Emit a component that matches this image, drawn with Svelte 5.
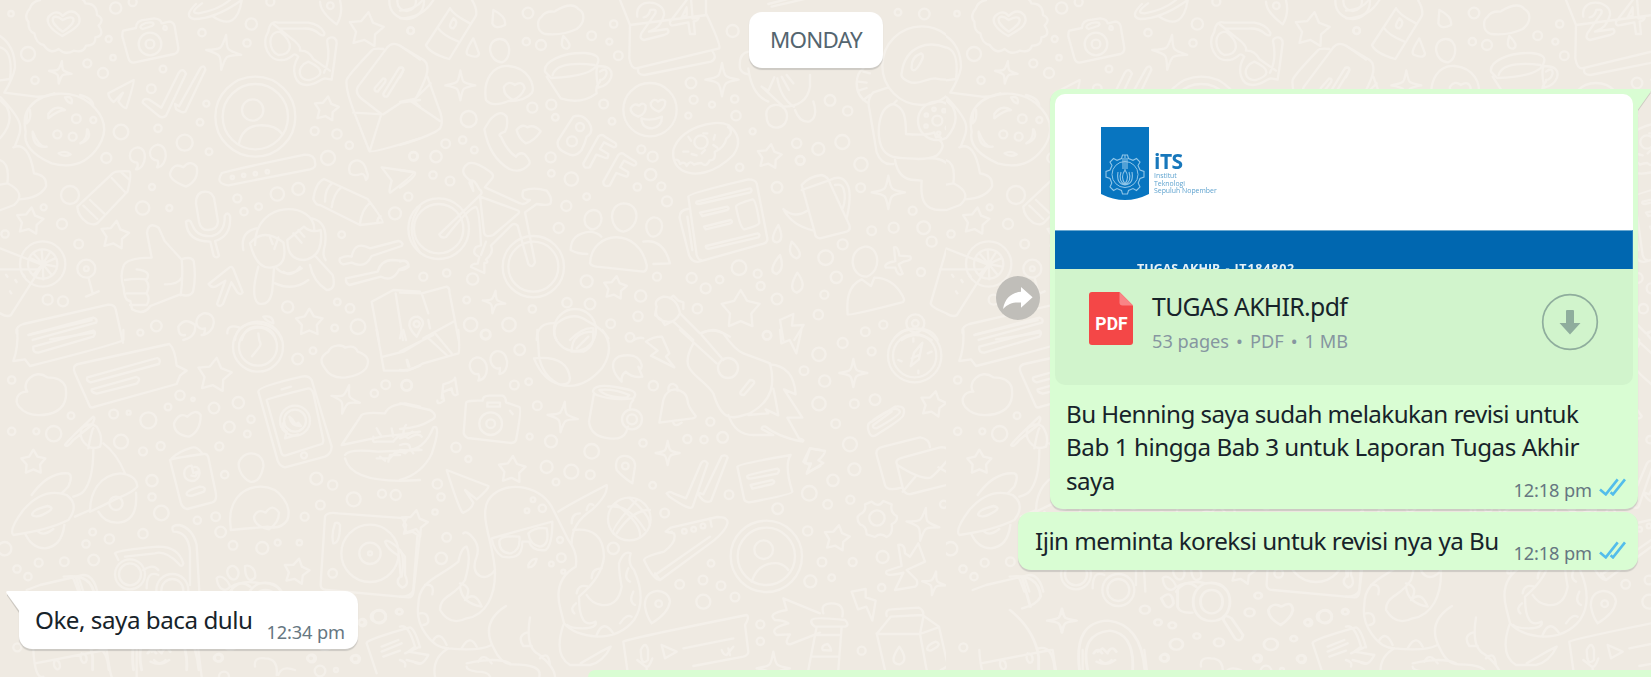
<script>
  // One wallpaper tile is 946px wide; each sheet holds doodles in its own local units.
  const sheets = [
    {
      m: 'matrix(.33333 0 0 .33333 0 0)',
      rings: '33 41 8,347 24 17,398 6 12,326 117 9,84 162 21,105 241 11,262 190 12,339 173 8,309 219 15,489 207 10,454 266 13,619 311 9,606 98 11,741 129 11,754 72 17,811 5 12,600 367 10,363 396 22,474 385 11,554 428 24,319 474 15,627 455 10,456 561 9,508 624 9,210 585 27,428 624 20,131 622 9,186 672 15,236 732 13,15 702 11,143 899 15,189 904 15,421 998 9,469 978 16,712 595 12,732 635 11,776 620 10,832 582 20,895 567 18,944 393 12,1011 402 14,1048 436 11,984 474 21,1232 92 10,1240 468 12,1225 590 12,1185 640 18,1025 704 10,1012 906 10,1050 925 13,863 921 17,1004 984 10,1074 980 22,697 532 5,731 526 5,766 521 5,802 515 5,450 132 34,450 132 13,766 350 120,766 350 98,758 330 32,229 356 13,128 792 68,128 792 44,259 806 27,259 806 7,991 17 10,1220 5 52,1220 5 28,172 403 12,218 410 12,280 360 9',
      stars: '1098 90 54 8,979 327 38 8,89 664 42 8,344 706 44 8,928 968 42 0',
      sparks: '671 157 53 8,181 217 34 8',
      paths: [
        'M120 0q-25 5-30 25q-20 25-5 40q0 30 18 35q5 30 28 35q20 30 45 12q20 20 45 5q30 8 37-15q30 0 28-25q30-5 10-35q20-20-5-32q0-35-35-35q-5-20-35-15',
        'M188 48q-14-18-33-6c-28 18-2 48 32 66c30-18 64-34 48-62q-20-24-47 2zM188 60c-30-25-49 2 0 35c50-30 37-57 0-35z',
        'M370 92l38-8q0-24 30-25l25-4q20 2 22 15l23-5q12 0 16 14l11 65q0 14-12 18l-122 26q-12 0-16-14l-18-65q0-14 3-17zM425 75q15-10 33-7q6 5-2 10l-28 9q-12-4-3-12zM492 78q10 0 8 10q-8 4-10-3z',
        'M588 12q-40 38-5 45q60 0 138-54M606 10q-42 30-10 30q60-10 94-40M640 50q70 45 85-48',
        'M805 95q5-35 30-27l90 0q35 5 48 30q2 15-16 3q-20-18-50-15h-70M820 72l50 40q35 25 30 40q25-2 40 25l50 35M805 95c-25 40 5 90 40 85c35 0 32-30 50-10c-25 40-10 85 25 85c30 0 40-18 55-20l20 4q8-50 15-110c0-26-35-18-28-1q10 50-10 90M840 95c-40 0-35 60-5 70c40 0 50-35 5-70zM925 185c-40 15-30 60 5 55c35-10 50-30-5-55z',
        'M960 5q0 30 50 68q20-30 10-73M1040 240q-5 25 23 98l45 115q5 8 152-38M1040 240q5-15 75-88q5-8 35-5M1162 142l-88 118q-10 16 8 34l62 48l-35 112M1060 338l90 5l52-35l58-8M1162 142q15-18 38-5l60 42M1240 302l20 18M1198 203q12-4 12 8l-48 78q-12 4-12-8zM1150 235q10 0 5 12l-22 28q-12 0-8-12z',
        'M325 280l76-40q3 4-22 84q-8 2-24-20l14-26l-28 28q-16-12-16-26zM428 308q0-14 18-10l38 25l52-104q12-18 22 2l-60 126q-8 8-20 2zM525 312l12 7l65-116q12-10 14 6l-60 126q-8 6-28-8z',
        'M717 430q10-50 60-54q50-2 70 26',
        'M0 108q45 30 45 95q-5 30-32 75l95 12q30 2 55-10M0 142q40 10 30 95l-30 4M2 292c75 80 65 90 42 148M0 415q45-50 20-95l-20-20M40 442q45-20 62 78q40 5 36 40q-20 35-80 38M0 480q30 10 22 70l-22 4M22 550q60 30 20 65l-40 15',
        'M90 320c40-50 130-50 180-10q70 60 25 130q-50 75-140 50q-90-40-78-95q-10-50 13-75zM80 370q0-50 10-40q4 30-10 40zM195 292q25-5 20 18q-12 0-20-18zM145 342q20-30 50-12q-20 0-50 25zM98 395q20 50 42 45q-40 5-42-40zM263 388q15 30-22 42q22-12 20-42zM176 460q20-10 36 3q-20 10-36-3zM240 285q40 10 40 35',
        'M412 508c25-5 35-65 0-66c-30 5-30 45 0 46q4 10-4 20zM473 502c30-5 35-65 0-68c-32 8-30 45 0 48q4 10-2 20zM510 520q12-35 40-18q20-24 40-2q8 40-32 60q-50-20-48-40zM232 620l106-100q8-8 50-6q8 5-5 60l-90 95q-10 8-30 0q-30-20-31-49zM335 534l40 42M365 518l22 20M270 600l42 40M250 617l42 40',
        'M665 520q4-5 250-56q30 0 30 24q5 15-15 20l-245 48q-40-5-20-36zM588 610q0-35 28-35q25 0 28 30l10 60q-2 25-30 25q-22 0-27-25zM558 665q12-10 18 8q15 40 60 35q40-10 38-60q8-15 16 0q5 60-45 75l12 44q-8 10-16 0l-10-42q-70 0-73-60',
        'M1050 520c-15-40 40-60 50-5q8 15-2 25q-4-20-15-18q-20 8-33-2zM1145 502l96 14q4 6-70 62q-6 0 4-36zM972 537q-25 10-32 60q8 20 20 18l120 60l68-8q4-4-45-70zM975 605q0-40 22-56M995 622q5-40 28-60M1080 670q5-40 30-62M1132 665q0-12 10-16',
        'M370 800q5-26 85-27l-14-75q5-35 35-15l18 40l50 55q30-10 37 5q8 50-2 92q-10 18-38 8l-90 35q-20 30-55 10l-5-25q-18 0-20-40q-12-35-1-63zM545 778q5 50-3 108M375 840q30-5 65-2q16-25-30-30M380 880h60q12-25-3-40M390 915h50q12-18 0-35M495 853q40 0 50-20',
        'M0 745l128 50l-95 150q-10 8-33-5M0 808h115M128 792L100 760M128 792L92 775M128 792L125 750M128 792L150 757M128 792L165 775M128 792L168 800M128 792L155 825M128 792L130 838M128 792L100 825M266 835l12 45M258 890l38-16M18 824l4 6M46 840l4 6M70 824l4 6M30 874l4 6',
        'M765 735c0-140 180-130 178-45M730 750q-10-55 40-65M935 655q50 10 40 80q-10 30 2 45M750 730q20 80 65 72q50-5 35-75q-60-45-100 3zM862 720q0 60 50 60q60-10 50-90q-30 10-50-10zM835 712l-12 35M810 712l8 20M880 700l25 28M895 690l18 20M775 800q-25 90 0 110q35 10 42-40l5-65M830 805q30 30 75 0M850 815q25 20 50-15M825 850q55 25 100-10M930 795q10 50 50 75q30 0 18-45l-50-55',
        'M685 805q10-10 15 2l28 70q-5 10-16 0l-18-30l-25 65q-12 12-18 0l25-70l-30 18q-12 4-20-8zM1020 775q20-10 35-5q10-50 55-25l85-22q18 5 10 15l-90 30q-20 40-60 20l-25 5q-15-5-10-18zM1038 835l95-20q10-35 45-35l35 3q15 5 10 15l-25 10q-20 40-55 22l-95 25q-12-5-10-20M1260 875l-80-5l-65 35l22 120M1187 880l22 140',
        'M50 1000q-5-20 20-28l255-58q20 0 22 14l22 100M90 1003l190-50q14 4 8 15l-190 52M150 1018l130-20M1260 618q-50 70 0 140',
        'M550 1020q40-10 35-45q-30-25-50 5q0 30 20 25M605 1005c45-5 50-70 5-65c-35 15-20 55 5 45q0 15-6 20M705 1020q5-50 65-50q60 5 75 50M725 1020q10-40 48-40q45 0 55 40M682 1000q-2-28 35-18M790 950q30-5 30 20q-20-5-30-20z'
      ]
    },
    {
      m: 'matrix(.33333 0 0 .33333 400 0)',
      rings: '32 92 10,384 39 16,641 72 11,575 107 13,379 125 11,423 135 15,628 125 9,655 167 13,397 323 15,454 314 15,611 312 13,466 352 10,636 364 10,206 357 24,137 431 13,188 420 11,223 450 10,41 469 13,108 470 17,99 525 11,150 543 13,452 472 15,454 520 10,514 537 20,560 590 10,499 618 15,476 684 15,724 448 12,758 470 15,712 561 11,752 524 17,784 559 12,801 604 15,873 249 16,881 299 12,936 314 9,865 347 9,1008 347 14,1004 297 11,1058 394 9,1019 502 11,1190 430 14,1200 481 13,998 93 18,1131 562 16,1017 803 22,1073 821 12,1082 858 12,959 839 11,917 865 15,875 834 15,1131 897 16,771 830 12,892 926 14,722 888 17,714 949 14,632 971 13,560 844 18,501 908 14,570 912 16,397 927 11,327 974 20,212 974 20,257 1004 15,200 900 10,218 837 17,140 819 11,70 830 12,750 329 80,540 381 12,516 424 15,116 686 91,116 686 74,400 800 92,400 800 75,50 972 9,903 426 20',
      stars: '1108 470 38 8,645 864 36 8,1022 930 60 0',
      sparks: '181 256 45 0,966 239 50 0,282 906 34 8',
      paths: [
        'M0 137l72 44q12 10 10 30q0 20-35 85l-47 10M82 230l40 110q8 30-2 45q-20 20-120 50M35 305l85 58M92 250l-50 50M0 204q15-5 8 12l-8 16',
        'M0 55q70 0 103-60M0 32q50-4 70-35M150 25L78 135q10 25 70 42l80-130q5-20-15-52M150 25q10 20 60 45M112 82q18 25 62 42M160 55q-20 30 0 30q18-18 0-30zM280 30q40 20 35 45q-30 15-38-5zM220 115q-30 45-15 50q30 12 32-5zM490 108q30 30 12 38q-25 0-12-38z',
        'M425 50c15-25 40-10 42-18q50-28 68-5c20 10 22 40-5 60q-40 20-95 15c-30-10-22-45-10-52zM298 117c-45 5-30 70 8 70c30-10 30-72-8-70zM258 300c-10-60 20-105 68-102c60 5 80 60 70 80q-20 25-70 25q-50 20-68-3zM312 260q15-20 32-5q25-15 30 10q-10 25-35 35q-30-15-27-40zM435 215c-5-30 50-58 120-56q50 4 38 30q-10 40-140 45zM440 230l42 65q60 20 108-15q-5-20 10-35M458 225c10-40 90-35 125-30M593 198q50 0 40 35q-10 25-38 30q-10-50-2-65zM600 215q20-15 20 5q-5 20-20 20',
        'M660 0l30 75l-2 100q5 30 20 30l250-60q5-10-40-105v-40M690 75l230-30M715 205q-5 20 18 20l200-40q20-10 5-30M712 50c-10-60 85-50 80-5q-10 40-45 50l55-8q10 12-10 18l-60 15q-15-2-8-20l42-60q5-15-15-10q-5 20-20 22M860 0l-50 65q-2 15 15 10l40-8l5 35h15l-4-38q12 0 15-10l-18 2l-5-60M845 52l15-30v25z',
        'M692 325q10-18 25-8q12-12 20 0q2 25-22 33q-25-10-23-25zM752 310q10-18 22-5q15-12 22 0q0 20-20 30q-25-10-24-25zM724 355q30 10 62-5q0 30-30 35q-30 0-32-30z',
        'M820 450c20-65 120-95 165-75q50 40 15 90c-60 60-120 65-155 45q-30-20-25-60zM822 480q15-5 18 12q15-10 20 6q10-20 22-4q10-5 22-5q15 15 25-8q20 0 15-25q30-15 35-40q25-20 5-35M910 400h12M945 405l-4 14M865 410l8 12M850 455h15M875 462l15 4M905 460l10-10M940 435l12 8',
        'M270 360q30-35 50-10q5 30-5 45q-25 8-12 15q20 45 45 60q10-15 25-8q20 20 15 30q-25 30-60 15q-60-35-75-120zM350 390q15-20 32-8q20-10 40 12q-20 30-45 36q-22-15-27-40zM475 420l45-70q25-10 45 15q20 30-5 45q-5 20-15 40q-20 25-45 10q-35-15-25-40zM550 490l45-80q10-10 20 0l32 20q5 10-5 12l-30-15l-12 20l25 15q0 15-8 12l-28-10l-20 38q-20 5-19-12zM610 545l45-80q10-10 20 0l32 20q5 10-5 12l-30-15l-12 20l25 15q0 15-8 12l-28-10l-20 38q-20 5-19-12z',
        'M215 545q-45-30-10-55q20-8 65 25q15 10 5 22l-20 25l105 48q10 5 20-2l10-8q-30 0-20-28q30-12 70 0q20 25 10 40q-10 5-40 0l-35 25l30 150q-8 20-20 5l-32-115q-10-10-20 0l-60 60q10 20-15 42q10 10-5 10q0 20 0 30l-40-18q0-10 20-10l5-20q-25-10-10-30l15-5q-5-110-15-115q-20 0-90 90q-15 5-20-8l125-120q5-10-5-15q-20-40-30-20q10 20 12 25zM240 590l110 40q15 5 0 15l-70 60q-25 10-28-8zM258 725l-15 40M0 510l45 8q5 10-45 45M0 785q25-10 26 15q-10 10-26 10',
        'M512 750q0-50 60-55q25 5 32 15M512 750q20 12 50 12M730 725q60-10 80 65l-50 2M570 790c5-100 145-110 170 5q2 18-10 20l-140-15q-15-2-20-10zM580 630c-40 5-30 60 0 58c35-10 30-60 0-58zM670 610c-50 5-40 80 0 85c50-10 55-85 0-85zM760 652c-35 10-20 60 0 58c35-5 35-60 0-58z',
        'M865 590q0-10 180-52q20 0 25 12l32 165q2 15-20 18l-185 52q-20 4-30-20l-28-110q-2-25 25-28M865 590l25 175q5 15 12 15M890 605l160-40q8 4 2 12l-155 35q-12 0-7-7zM900 638l82-18q8 5 0 10l-75 18zM912 680l80-20q8 5 0 10l-75 18zM918 738l155-38q10 4 2 12l-145 34q-14 2-12-8zM1008 620q0-8 50-22q10 2 20 70q0 8-45 20q-12-2-25-68zM862 650l15 100',
        'M1135 675q-30 50-5 52q25-5 5-52zM1175 725q40 40 15 50q-30-10-15-50zM1140 765q-40 50-10 57q25-15 10-57zM1192 818q-30 50-2 60q35-15 2-60z',
        'M0 878l65 2l75-20q10 5 8 15l28 145M65 880l20 60M85 960l5 25M160 965l-90 50M0 1015l5-20M28 975q0-25 25-25q20 10 15 25l-18 35q-20-20-22-35zM410 1020q0-55 60-50q50-40 95-5q40 20 60 50M470 970q-15 30 0 50M510 1020q40-40 70-35v35M770 920q-10-20 20-30q40 0 50 50q-15 30-40 25q-40-5-30-45zM770 920l-5 25l20 15l10 15l20-10M810 895l10-8l15 15l15 5v20M840 940l60 60M820 965l60 55M900 1000q40-20 90 10M700 1020q20-10 30-5',
        'M1105 12l155-40M1115 20l150-35M1045 155q-30 5-25 50q5 15 25 18M1045 205q10 80 60 100M1085 260l65 60q70 0 80-60M1085 260l20 12l18-40M1100 350c-10-40 50-50 60-10c10 50-60 60-60 10zM1132 235q10 60 50 85M1145 230l22 40M1160 225l20 25M1230 225v35M1185 330q15 40 45 34q25-15 10-60'
      ]
    },
    {
      m: 'matrix(.33333 0 0 .33333 720 0)',
      rings: '534 37 10,613 42 16,330 301 16,383 333 14,295 447 18,241 481 13,367 426 21,423 493 20,422 563 13,578 632 12,521 683 15,455 692 13,611 683 19,635 725 15,603 816 12,368 733 15,317 773 22,349 832 17,313 884 12,295 944 14,490 974 12,436 995 13,141 1006 12,605 197 118,652 362 58,652 362 15,619 345 5,642 328 5,672 332 5,686 354 5,682 384 5,656 400 5,618 378 5,586 970 27,586 970 10',
      stars: '',
      sparks: '505 577 50 0',
      paths: [
        'M545 220c10-80 80-110 160-65q20 50 10 80q-30 8-70 0c-30 0-60 30-95 0q-8-8-5-15zM575 200q0-30 28-40q12 5 0 25q-15 30-25 25q-5-2-3-10zM505 262l-45 15q-20 20-12 50l22 130q15 40 50 35M445 310q-35-20-35-60q0-30 20-45M430 215l20 5M415 245l25 3M415 272l25-8M430 300l20-15M520 312c-50 10-50 100-35 130c20 40 60 30 110 35q35 0 55-10q30-30 10-45q10-15-12-10l-5-15q-20 10-85 5c0-50-5-80-38-90zM520 312l10-10M525 480q10 60 60 60l20 2c-5 60 10 90 60 88q30 0 45-12M625 475q75-5 80 78',
        'M245 555q20-25 60-30q20 5 25 25l58 125q5 15-8 20l-80 20q-15-2-15-15l-40-145zM245 570l80-28M330 540q40-20 55 20q10 30-5 95M345 555q20-5 25 10q10 30-2 60M262 632q-40 25-72-5q25 50 92 65',
        'M435 740c-55 10-45 90 5 90c50-20 35-95-5-90zM425 838c-45 20-45 70-42 105q5 5 160-35q15-2 5-20q-30-55-85-55l-10 25zM522 742q12-5 16 25l32 2q10 12-20 16l-14 8l12 28q-15 10-22-18l-28 0q-10-12 28-20zM680 745l-48 165q2 15 70 38M680 745M660 808h20M180 960l40-18l-4 35l35-2l-28 45M180 960l10 60M520 1020q20-35 68-35q50 0 65 35M545 1020q40-30 90 0'
      ]
    },
    {
      m: 'matrix(.33333 0 0 .33333 0 330)',
      rings: '35 150 11,213 257 10,341 252 13,386 248 6,35 304 11,109 304 9,161 311 23,363 335 21,445 271 24,504 231 10,540 196 14,579 208 5,642 234 16,715 218 17,753 268 11,688 291 16,742 312 10,658 349 12,482 348 12,429 364 12,456 452 17,456 501 11,484 549 22,429 611 14,278 606 10,328 627 14,258 642 11,14 656 20,116 698 12,193 695 13,281 690 16,51 717 11,84 740 11,592 571 11,647 560 13,674 434 11,662 606 16,699 646 13,787 654 18,833 638 9,898 638 8,914 560 12,961 525 13,949 446 18,998 465 14,1061 508 21,1146 491 12,1187 495 15,893 87 16,939 62 10,1123 190 11,1157 164 13,1220 166 15,774 50 75,774 50 57,885 272 45,885 272 33,912 376 9,348 520 20,390 733 45,390 733 33,517 780 48,517 780 33,1110 670 86,1110 670 32,1110 670 6,998 730 13,1138 860 20,1198 845 8,1088 878 11,52 952 12,657 983 12,936 985 12,1068 987 12,960 1023 16,1008 1020 6,672 1040 15',
      stars: '643 136 53 8,100 397 38 0,889 725 40 12',
      sparks: '1037 208 44 14',
      paths: [
        'M370 0v30q-10 10-280 78l-15-20l-35 5q15-40 12-93M85 15l190-45M100 50l180-48q10 5 0 18L115 68q-18 0-15-18zM225 130l45 100q5 5 15 0l245-68l10-25q5-5 20-15l-30-15q-5-50-22-65L235 102q-20 5-10 28zM262 142l210-58q12 5 5 18l-205 55q-15-5-10-15zM275 178l135-37q15 5 0 20l-120 30q-18-5-15-13zM82 185c-30 0-40 25-25 45q30 35 90 22q60-15 50-80q-10-30-55-30c-40-30-80 20-60 43z',
        'M195 345q10-15 85-85q8 5-5 25l-55 45q-20 25-25 15zM245 295q25-20 45-5q20 30 10 60q-25 10-40-5q-25-20-15-50zM265 355q10-55 15-60M310 340q40 30 65 90M280 360q0 90-30 125q-10 10-30 15M95 495q50-70 110-65q15 5 0 40l-20 20M40 615q-15-15 30-75q60-70 130-45q40 30 5 75q-60 30-165 45zM98 550q0-10 45-22q20 5 5 15q-30 20-45 15q-10-2-5-8zM270 545c0-60 30-110 90-115q50 5 52 40q-10 15-60 35q-50 25-82 40zM225 560l45-20M295 545q20 35 60 33q60-5 53-90M75 610q20 45 60 45q50-5 58-70M115 605q15 15 45-8',
        'M510 390q5-5 100-18q12-2 15 10l22 105q5 25-10 30l-75 20q-15-2-20-20zM515 385q20-20 60-32q15-5 30 15M560 490q0-8 40-20q20 0 12 15l-35 12q-18 2-17-7zM575 407c-30 0-30 45 0 46c30 0 30-45 8-42M575 407l5 22l14-4l-8 14l-12-2M522 280q15-35 40-20q25-25 40-5q0 50-35 65q-45-5-45-40zM775 185q-2-15 130-45q20-5 30 10l60 200q0 20-20 30l-120 32q-15-2-22-20zM800 210q5-5 125-35q10 0 15 15l30 140q0 10-5 12l-110 35q-10 0-12-12zM845 178l28-8M855 325l5-20q-10-5-12-25M855 325l40-12M868 260q5 30 35 28l-8-10l-8 5l-10-15zM775 10l3 22q8 12-2 22l-20 25',
        'M975 115q-25-30 10-50c10-25 45-20 50-12q30-10 38 12q45 15 25 50q-15 20-60 27q-45 5-63-27zM1130 0l22 122h70l38-15M1150 80l60-15l50-30M1218 30l-8-30M1222 90l6 20M720 390c20-35 75-20 70 20q-10 50-40 45c-30-15-40-50-30-65zM692 590c-10-70 30-120 90-120c60 0 95 60 80 100q-20 30-60 20q-50 5-110 10zM762 560q10-25 35-12q20-30 40 0q0 30-30 50q-45-10-45-38z',
        'M1025 345l60-90q10-10 70-5q10-25 60-30l45 10M1025 345l120-25q50-5 115-15M1145 320q-10-15-15-25M1180 320l-5-25M1210 315q0-20 8-30M1035 385q20 80 225 65M1035 375q10-20 100-10l125-5M1140 380l15 12M1165 395l5-20h30M1130 385h40q20-30 45-15q20-20 50-10M1120 320q-5 20 10 15h50q20-30 45-10q30-20 40-5',
        'M975 560q5-15 40-10l205 15l-10 20l10 22l28-10l12 15l-20 175q-2 15-15 15l-245-22q-20 0-18-20zM1005 580q-12 35-5 60q20 0 20-55q-5-10-15-5zM1155 635q5-10 35 15l25 30v55q15 30-8 38q-25-15-5-35l-5-60q-35-20-42-43zM518 600q-5-15 20-15q40 10 52 60l8 140M520 605q45 0 50 60v100M345 670q10-10 130-20q60 0 75 50q-5 15-15 0q-40-40-70-30l-90 10M345 670l10 20M430 720q30-20 45 0M475 735q-35-15-35 40',
        'M690 710c-20 10 0 50 20 35c15-20-5-45-20-35zM735 708c0 40 15 50 30 35c5-25-15-40-30-35zM650 745c5 40 30 40 40 25c-5-20-30-40-40-25zM690 785q25-40 90-25q40-5 60 20M80 780l40-15l130-30q30 0 42 50M220 745l15 40M235 740l15 45',
        'M1100 940q-5-10 130-48q15 5 30 60M1100 940l30 90M1145 950l50-20M1145 965l60-25M1150 980l50-18M1215 970l45-20M1220 990l40 10M765 1010q-5-30 30-25q40 0 35 50M835 1035q10-30 50-15M100 960q5 90 30 80M320 960q10 70 15 80M410 960v80M595 960l10 80M105 1000l210-40M165 990c-10 20 10 40 15 20q0-20-15-20M245 970c-10 20 10 40 15 20q0-20-15-20M455 965l15-10l15 15M462 990q15 20 35 0'
      ]
    },
    {
      m: 'matrix(.33333 0 0 .33333 400 330)',
      rings: '257 13 13,359 59 16,343 165 13,386 155 10,412 227 13,389 320 9,453 334 18,575 364 22,440 411 18,514 425 21,571 434 13,468 456 10,205 387 9,168 352 14,112 462 14,123 501 11,105 546 8,140 622 13,124 685 17,20 166 16,690 22 13,760 167 14,729 339 11,862 327 12,912 329 11,968 322 16,931 275 12,1101 16 13,1212 122 13,758 466 10,794 549 13,987 494 13,1133 536 16,1228 490 22,1223 603 14,933 700 10,640 655 17,839 763 13,909 750 13,963 767 13,1005 801 13,910 815 21,1081 883 12,1081 934 11,1231 754 18,1099 679 107,1099 679 86,1091 659 28,272 281 34,272 281 13,696 268 30,696 268 15,676 408 10,776 821 10,984 114 30,688 567 64,427 535 11,399 509 7,381 542 7,480 630 9,484 683 13,454 702 7,490 725 6,853 604 7,881 598 7,909 588 7,525 0 63',
      stars: '336 420 42 4,42 582 42 10',
      sparks: '488 261 46 8,803 369 36 0,1120 1015 50 0',
      paths: [
        'M235 152c35-5 35-70-5-70c-35 10-20 55 5 50q5 12 0 20zM298 132c35-5 30-75-10-68c-30 10-15 60 12 50q0 12-2 18zM125 205l5-42q35-10 35-20l8 50q-15 10-18-18l-28 12l5 25q-20 15-20 0M198 220q0-10 50-8q0-15 20-15h40q10 5 10 20l40 14q8 5-10 100q-5 8-15 8l-130-15q-10-5-12-15zM262 218h38v12l-38 0zM330 242l8 10',
        'M412 0l5 78q10 60 60 85q70 20 130-50q40-60 0-113M402 85q100-10 108 60q0 20-30 18q-50-10-78-78zM515 65q0-60 65-60q5 45-30 60zM530 55l35-35M665 155c-30-30-35-60-10-75q60-15 70 25q0 20-10 5l12 30q-30 5-50-15q-15 10-12 30zM738 35q20-15 48-15l22 50l-10 10l25 32l-70-35l20-15zM580 180q10-25 110 0q25 8 10 25q-60 8-110-10q-15-10-10-15zM598 180q40-5 90 15l-8 8q-60 0-82-23zM582 190l-15 85q5 45 60 50q40 5 52-20l5-15M700 210q-10 10-10 25',
        'M778 278l12-68q8-30 35-32q35 5 38 35q0 15 24 45q0 5-10 7zM820 278q5 15 25 0M805 180q0-20 15-18q15 5 12 20M650 420c-15-60 60-50 55-10l-8 50q-30-20-47-40zM840 0l110 100M905 15l65 75M880 40c-50 90 20 90 60 150c30 100 70 70 110 60c70-40 75-90 60-150l-80-30q-25-10-60-60q-30-20-65 0M1022 185l28-35q15 0 12 10l-30 35q-15 0-10-10zM985 255q20 60 75 60h60l-35-18q0-10 12-7q35 30 110 45q10-5-10-10l-35-62l45 0l-55-85l35 15q-5-85-78-90M1045 255l60-5l-8-12l38 18q-10-60-15-80M1140 0l4 40l25-10l20 40l15-70',
        'M0 220l90 20q30 20 0 32q-30 20-90 25M0 325q20-5 38-20M0 360q70 10 100-68q25-10-5 80q-30 60-95 78M0 345q30-10 30 10l10 15M0 65l100-50M0 120q30 5 70-20l105-30q5-5 0-70M80 20l60 55M105 10l50 60M20 90l5 20',
        'M140 420l125 48q5 5-35 40l-35-28l25 38q-5 20-30 30q-8 5-50-128zM1012 410q2-8 160-35q-20 30 5 110q0 8-130 32q-15-2-15-12zM1042 438q5-5 90-22q10 5 0 15l-80 15q-12 0-10-8zM1052 465l65-15q12 5 0 12l-60 14zM800 490q10-8 20 0l38 15l45-105q10-15 20 0l-45 130q-5 15-70-30zM895 488l15 5l55-115q15-5 18 5l-50 130q-20 10-38-20zM1215 400l15-45l30 5M1215 400h18l-12 28l40-20',
        'M285 730c0-80-50-170-20-220c40-60 150-50 190 20l50 100q30 40 22 80M275 625q180-50 182-50q0 70-20 85q-40 5-50-25h-20c0 50-30 50-60 45q-25-15-32-55zM298 635q0-20 60-15q5 40-25 50q-35 0-35-35zM385 610q20-20 55-15q10 50-20 55q-30-5-35-40zM475 545q20-15 145-80q5 30-45 75q-60 40-60 100M520 600q90-10 92 80q-5 60-75 120q0 100 50 75q5 20-40 20q-35 0-45-10M527 710q-70 40-45 130l10 40q30 35 100 40q70 0 110-50q40-60 0-150q-20-20-10-50q-20-10-35 30q0 30 8 70q-10 60-60 55q-30-5-45-30M515 580q0-30 25-30M560 540q5-25 20-15M575 745q0-30 30-30M530 790q5-30 35-20M523 850q-15-15 5-30M590 915q20-50 50-5M660 880q20-30 35-20M705 825q-20-10-5-40M690 755q-20-10-5-40',
        'M385 705q10-20 25-18q-5 25-25 25zM190 610q10-10 30 15q20 25 10 55c-25 60 30 80 55 40M200 650q-15 0-25 45c-60 50-120 55-120 130c-10 60 40 130 90 130q90 10 130-10M200 650q15 30-5 100c-30 50-75 45-75 90q30 50 80 25c60-10 85-70 85-135M75 765q30-5 22 28M60 850q25-5 25 25q-5 10-15 10M100 930q20-30 40 15M185 955q25-45 45-5M180 760q40 10 15 50q30-30 50 20M180 770q5 50 65 60M318 828q-80 50-35 130q20 45 55 45q90 0 80 37M390 862q-15 90 25 110q50 40 50 70M380 908q-30 10-10 40h25M420 985q25-25 30 20M145 955q-50 30-40 85M200 1000q90-20 130 0M200 1010q0 10 30 15q35 0 40 15M235 995q15-30 40 5M490 885q-30 90 20 120h60q40-10 62-55l-30 15l-60 35',
        'M625 530q60-10 110 70M650 610q45-70 100-70M645 520q80 60 75 100M690 505q60 50 60 80M710 510q-80 90-70 100M732 690q0-10 60-25q40-30 30-55l-25-5l15-12l140-32q35 0 30 20q-5 20-40 50L780 750q-20 0-48-60zM765 735l165-115M930 565l5 25M800 605q10 5 15 0M765 730l15 20M735 830c-5-60 70-60 75-15q-5 35-55 65q-15-20-20-50zM670 935q10-8 370-80q10 5-5 30l10 80q0 10-15 15l-150 28M670 935l12 85M722 960q15-30 22 0v30q-15 15-20-5zM712 990l25 20q10 5 20-25M740 1010v15M785 945l45 20l-35 20zM850 955l150-30M965 960q5 15 15 15l20-25M985 955l5 20M1055 755q20-60 80-55q20 5 30 20M1260 850l-110-45l10 35q-60 10-35 30q25 0 40 10q-60 15-35 35l40-2q-20 30 0 30l90-35M0 660q15 20 5 80M52 620l-12 160q-5 20-40 20M0 890q25-10 45 60l-20 15l60 10q-20 40-45 20M0 990q20 5 15 20'
      ]
    },
    {
      m: 'matrix(.33333 0 0 .33333 700 330)',
      rings: '428 39 15,515 64 12,374 153 17,357 73 20,357 221 20,407 281 13,463 221 13,525 209 16,450 343 21,463 418 18,399 451 17,383 523 13,451 509 12,366 696 13,395 743 10,458 696 12,548 681 18,545 773 11,485 962 12,731 523 11,644 77 80,644 77 65,531 564 23',
      stars: '410 625 40 10,699 223 40 12',
      sparks: '460 129 42 0,669 583 50 10,702 760 36 10',
      paths: [
        'M642 68l25-30l-10 50l-25 20zM635 85l22-10M640 25v10M655 130v-8M595 90l10 4M695 65l-12 5M505 300q-5-20 10-25l70-45q35-5 25 25q0 10-85 62q-15 5-20-17zM520 270q70-50 80-25q0 10-70 50q-15 0-10-10l55-40M530 375q-5-20 20-25l110-28q30 5 30 30M530 375l25 90q5 20 50 8M590 400q-5-12 20-18l110-30q20-2 25 10l22 80q5 15-15 20l-120 30q-15 2-22-12zM592 405q70 45 100 38q25-20 60-65M608 485l38-45M765 440l-50-28M310 395l20-40l45 8q0 10-20 28l15 8l-50 32l10-25z',
        'M515 515q20 20 35-2l25 10q-5 25 15 35q5 15-15 25q5 30-15 38q-20-15-35 0l-25-8q0-25-20-30q-15-20 0-30q20-10 15-30zM595 645q20-5 20 25l15 10l25-40l20 55l-55 25l30 30q5 15-5 20l-60 10l25-52q-60 15-50-5l45-15zM455 785l42-8v25l30 10l-10 60l-18-42l-25 8zM370 850q-10-30 25-30q40 0 32 40M335 870q5-10 100 0q15 15 0 20l-90 0q-15-10-10-20zM350 890l-25 130M425 890l-10 130M345 915h75M335 980h80M368 960q-5-15 15-18q10 10 10 20zM532 910l40-50l95-5l50 35l25 110q5 10-20 20M530 910l25 110M530 912h130l20 108M660 912l10-50M660 912l55-20M560 858q-5-20 15-20l80-5q15 5 15 20M598 950q-35 50 0 53q30-10 0-53zM682 955q0-10 25-20q15 5 5 15l-20 12q-12 0-10-7z'
      ]
    },
    {
      m: 'matrix(.40884 0 0 .33333 64 390)',
      rings: '397 706 9,457 738 8,407 763 16,377 804 10,511 757 12,586 667 12,607 617 9,604 805 9,638 763 17,694 746 8,728 697 8,769 680 18,820 665 8,712 806 10,330 659 12,362 697 9',
      stars: '', sparks: '127 692 36 0',
      paths: [
        'M493 578c-60 0-60 115 0 115s60-115 0-115zM493 600c-36 0-36 70 0 70s36-70 0-70zM370 625q25-30 30 15q-15 30-30-15M410 590q25-20 45 0M410 600v50q5 20 36 18M522 690q0-20 20-5l28 50q-5 25-20 10zM632 660q10-25 32-10q25-20 28 10q-5 25-30 45q-30-20-30-45M170 840q-15-145 70-148q80 10 90 148M190 840q-20-110 55-118q60 10 55 118M205 790q10-20 20 0M240 785q10-20 20 0M212 815q25 15 45-5M0 560q70-10 75 60q-10 25-45 35M30 565l20 85M0 660q60 60 70 140v40M70 775q35-10 40 65'
      ]
    }
  ];

  const triples = (s) => (s ? s.split(',').map((v) => v.trim().split(' ').map(Number)) : []);

  function star([cx, cy, r, rot]) {
    const pts = [];
    for (let i = 0; i < 10; i++) {
      const a = ((i * 36 - 90 + rot) * Math.PI) / 180;
      const d = i % 2 ? r * 0.56 : r;
      pts.push(`${(cx + d * Math.cos(a)).toFixed(1)} ${(cy + d * Math.sin(a)).toFixed(1)}`);
    }
    return `M${pts.join('L')}Z`;
  }

  function spark([cx, cy, r, rot]) {
    const pt = (deg, d) => {
      const a = ((deg - 90 + rot) * Math.PI) / 180;
      return `${(cx + d * Math.cos(a)).toFixed(1)} ${(cy + d * Math.sin(a)).toFixed(1)}`;
    };
    let d = `M${pt(0, r)}`;
    for (let k = 0; k < 4; k++) d += `Q${pt(k * 90 + 20, r * 0.35)} ${pt(k * 90 + 45, r * 0.33)}Q${pt(k * 90 + 70, r * 0.35)} ${pt(k * 90 + 90, r)}`;
    return d + 'Z';
  }
</script>

{#snippet ticks()}
  <svg class="ticks" viewBox="0 0 27 18" aria-hidden="true">
    <path d="M1 11.400L6.800 16.400L18.700 1.400M11.600 14.200L14 16.400L26 1.400" />
  </svg>
{/snippet}

<main class="chat">
  <svg class="wallpaper" width="1651" height="677" aria-hidden="true">
    <defs>
      <g id="doodles">
        {#each sheets as s}
          <g transform={s.m}>
            {#each triples(s.rings) as [x, y, r]}<circle cx={x} cy={y} {r} />{/each}
            {#each triples(s.stars) as v}<path d={star(v)} />{/each}
            {#each triples(s.sparks) as v}<path d={spark(v)} />{/each}
            {#each s.paths as d}<path {d} />{/each}
          </g>
        {/each}
      </g>
      <clipPath id="tile"><rect width="946" height="677" /></clipPath>
    </defs>
    <g clip-path="url(#tile)"><use href="#doodles" /></g>
    <g transform="translate(946 0)"><g clip-path="url(#tile)"><use href="#doodles" /></g></g>
  </svg>

  <div class="day"><span>MONDAY</span></div>

  <div class="row out first">
    <button class="forward" aria-label="Forward">
      <svg viewBox="0 0 44 44"><path d="M7 33C9 22 15.500 16.500 25 15.800V11L36.600 21.300L25 31.800V26.600C17.500 26 12 27.500 7 33Z" /></svg>
    </button>
    <article class="bubble doc">
      <svg class="tail right" viewBox="0 0 13 22"><path class="shade" d="M0 22L12.500 4.500V2H0Z" /><path d="M0 0H12.500V3L0 20.500Z" /></svg>
      <div class="preview">
        <div class="letterhead">
          <svg class="crest" viewBox="0 0 48 73">
            <path d="M0 0H48V67Q24 79 0 67Z" fill="#0875c0" />
            <g fill="none" stroke="#8fc5e8">
              <path d="M20.500 31.500L21.500 28H26.500L27.500 31.500L32 33.300L35.500 31.500L39 35L37 38.500L39 43L43 44.500V50L39 51.500L37.200 56L39 60L35.500 63.500L32 61.500L27.500 63.500L26.500 67H21.500L20.500 63.500L16 61.500L12.500 63.500L9 60L10.800 56L9 51.500L5 50V44.500L9 43L11 38.500L9 35L12.500 31.500L16 33.300Z" stroke-width="1.100" />
              <circle cx="24" cy="47.500" r="13" stroke-width="1" />
              <path d="M24 28V43M22 31V42M26 31V42M17 45Q15 57 24 58Q33 57 31 45M20 45Q17 54 24 58Q31 54 28 45M24 43Q19 50 24 57Q29 50 24 43" stroke-width="1.100" />
            </g>
          </svg>
          <div class="school">
            <b>iTS</b>
            <span>Institut</span><span>Teknologi</span><span>Sepuluh Nopember</span>
          </div>
        </div>
        <div class="band"><span>TUGAS AKHIR</span><span>-</span><span class="code">IT184802</span></div>
      </div>
      <div class="file">
        <div class="pdf">
          <svg viewBox="0 0 44 53"><path d="M3 0H30.500L44 13.500V50Q44 53 41 53H3Q0 53 0 50V3Q0 0 3 0Z" fill="#f44747" /><path d="M30.500 0L44 13.500H33.500Q30.500 13.500 30.500 10.500Z" fill="#f98486" /></svg>
          <b>PDF</b>
        </div>
        <div class="info">
          <div class="name">TUGAS AKHIR.pdf</div>
          <div class="meta">53 pages <i>•</i> PDF <i>•</i> 1 MB</div>
        </div>
        <svg class="download" viewBox="0 0 58 58"><circle cx="29" cy="29" r="27.300" /><path d="M26 17H32Q33 17 33 18V30H39.500L29 41.500L18.500 30H25V18Q25 17 26 17Z" /></svg>
      </div>
      <div class="body">
        <p>Bu Henning saya sudah melakukan revisi untuk<br /><span class="l2">Bab 1 hingga Bab 3 untuk Laporan Tugas Akhir</span><br />saya</p>
        <div class="stamp"><time>12:18 pm</time>{@render ticks()}</div>
      </div>
    </article>
  </div>

  <div class="row out second">
    <article class="bubble short">
      <p>Ijin meminta koreksi untuk revisi nya ya Bu</p>
      <div class="stamp"><time>12:18 pm</time>{@render ticks()}</div>
    </article>
  </div>

  <div class="row in">
    <article class="bubble reply">
      <svg class="tail left" viewBox="0 0 13 22"><path class="shade" d="M13 22L1 4.500V2H13Z" /><path d="M13 0H2Q-1 0 1 3L13 19.500Z" /></svg>
      <p>Oke, saya baca dulu</p>
      <div class="stamp"><time>12:34 pm</time></div>
    </article>
  </div>

  <div class="next"></div>
</main>

<style>
  :global(body) { margin: 0; overflow: hidden; }
  .chat {
    position: relative;
    box-sizing: border-box;
    width: 1651px;
    height: 677px;
    padding-top: 12px;
    overflow: hidden;
    display: flex;
    flex-direction: column;
    background: #efeae2;
    color: #17232a;
    font-family: "Noto Sans", "Open Sans", sans-serif;
  }
  .wallpaper { position: absolute; inset: 0; }
  #doodles { fill: none; stroke: #f4f0ea; stroke-width: 7; stroke-linecap: round; stroke-linejoin: round; }
  .day, .row, .next { position: relative; flex: none; }
  .day {
    align-self: flex-start;
    width: 134px;
    height: 56px;
    margin-left: 749px;
    border-radius: 13px;
    background: #fff;
    box-shadow: 0 1.500px 1px rgba(11, 20, 26, .15);
    color: #54656f;
    font-size: 22.400px;
    line-height: 56px;
    text-align: center;
    letter-spacing: -.75px;
  }
  .row { display: flex; }
  .out { justify-content: flex-end; padding-right: 13px; }
  .first { margin-top: 21px; align-items: center; gap: 10px; }
  .second { margin-top: 3px; }
  .in { margin-top: 21px; padding-left: 19px; }
  .bubble {
    position: relative;
    box-sizing: border-box;
    border-radius: 13px;
    background: #d9fdd3;
    box-shadow: 0 1.500px 1px rgba(11, 20, 26, .15);
  }
  p { margin: 0; font-size: 24.200px; line-height: 33.500px; letter-spacing: -.58px; white-space: nowrap; }
  .l2 { letter-spacing: -.45px; }
  .forward {
    width: 44px;
    height: 44px;
    margin-bottom: 2px;
    padding: 0;
    border: 0;
    border-radius: 50%;
    background: #c0beb9;
  }
  .forward svg { display: block; fill: #fff; }
  .tail { position: absolute; top: 0; width: 13px; height: 22px; fill: #d9fdd3; }
  .right { left: 100%; }
  .left { right: 100%; fill: #fff; }
  .shade { fill: #cdc9c2; }
  .doc { width: 588px; height: 420px; padding: 5px; border-top-right-radius: 0; }
  .preview {
    height: 175px;
    border-radius: 10px 10px 0 0;
    overflow: hidden;
    background: #fff;
    display: flex;
    flex-direction: column;
  }
  .letterhead { height: 136px; flex: none; box-sizing: border-box; padding: 33px 0 0 46px; display: flex; gap: 5px; filter: blur(.4px); }
  .crest { width: 48px; height: 73px; }
  .school { display: flex; flex-direction: column; padding-top: 23px; color: #5fa3cf; font: 6.900px/7.700px "Open Sans", sans-serif; }
  .school b { color: #1777bb; font-size: 21px; line-height: 22px; letter-spacing: -.5px; }
  .school span { white-space: nowrap; }
  .band {
    height: 39px;
    flex: none;
    box-sizing: border-box;
    padding: 30px 0 0 82px;
    border-top: 1px solid #6aa8d0;
    border-right: 1px solid #2c7fbd;
    background: #0067b0;
    color: #e5f1f8;
    font: bold 12.500px/16px "Open Sans", sans-serif;
    display: flex;
    gap: 5px;
    white-space: nowrap;
    filter: blur(.25px);
  }
  .code { letter-spacing: .8px; }
  .file {
    height: 116px;
    box-sizing: border-box;
    padding: 23px 34px 0 34px;
    border-radius: 0 0 10px 10px;
    background: #d1f4cc;
    display: flex;
    align-items: flex-start;
  }
  .pdf { width: 44px; height: 53px; display: grid; }
  .pdf > * { grid-area: 1 / 1; }
  .pdf b { color: #fff; font: bold 17.500px/20px Roboto, sans-serif; text-align: center; padding: 22px 0 0 1px; }
  .info { flex: 1; padding-left: 19px; white-space: nowrap; }
  .name { font-size: 24.800px; line-height: 34px; margin-top: -3px; letter-spacing: -.65px; }
  .meta { font-size: 18.200px; line-height: 26px; margin-top: 5px; color: #8696a0; }
  .meta i { font-style: normal; margin: 0 2.300px; }
  .download { width: 58px; height: 58px; flex: none; margin: 1px 0 0; fill: #8fad9d; }
  .download circle { fill: none; stroke: #8fad9d; stroke-width: 1.700; }
  .body { padding: 11.500px 7px 0 11px; display: grid; }
  .body > * { grid-area: 1 / 1; }
  .stamp { display: flex; gap: 7px; align-self: end; justify-self: end; color: #667781; font-size: 18.200px; line-height: 24px; letter-spacing: -.1px; white-space: nowrap; }
  .body .stamp { margin-bottom: -5px; }
  .ticks { width: 27px; height: 18px; flex: none; fill: none; stroke: #53bdeb; stroke-width: 2.600; }
  .short { width: 620px; height: 58px; padding: 12px 12px 0 17px; display: flex; justify-content: space-between; }
  .short p { letter-spacing: -.53px; }
  .reply p { letter-spacing: -.47px; }
  .short .stamp, .reply .stamp { align-self: flex-start; margin-top: 16.500px; }
  .reply { width: 339px; height: 58px; padding: 12px 13px 0 16px; border-top-left-radius: 0; background: #fff; display: flex; justify-content: space-between; }
  .next { margin: 21px 0 0 588px; height: 7px; border-radius: 13px 0 0 0; background: #d9fdd3; }
</style>
